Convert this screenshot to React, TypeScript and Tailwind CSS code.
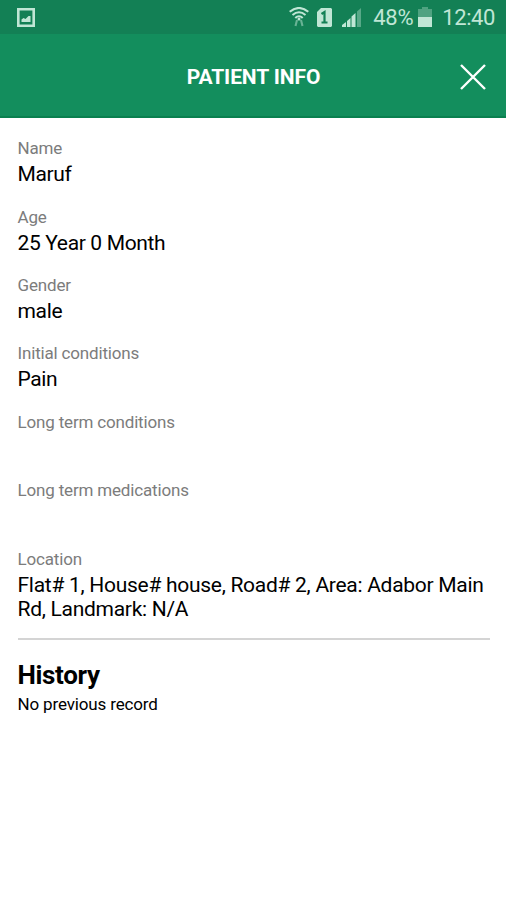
const fields = [
  ["Name", "Maruf"], ["Age", "25 Year 0 Month"], ["Gender", "male"],
  ["Initial conditions", "Pain"], ["Long term conditions", ""], ["Long term medications", ""],
];
const loc = ["Flat# 1, House# house, Road# 2, Area: Adabor Main", "Rd, Landmark: N/A"];

export default function App() {
  return (
    <div className="h-[900px] w-[506px] overflow-hidden bg-white font-['Roboto',sans-serif] text-black">
      <div className="flex h-[34px] items-center bg-[#138055] pr-[11px] pl-[17px] text-[#c0e6d5]">
        <svg width="18" height="19" viewBox="0 0 18 19" fill="none" stroke="currentColor" strokeWidth="2.6"><path d="M1.3 1.3h15.4v16.4H1.3z" /><path d="M4.500 14V11.500l2-1.500 2 1 3-3h2v6z" fill="currentColor" stroke="none" /></svg>
        <svg className="ml-auto" width="20" height="20" viewBox="0 0 20 20" fill="none" stroke="currentColor" strokeWidth="2.1"><path d="M.7 4.800Q10-2.800 19.300 4.800M3.500 8Q10 2.500 16.500 8M6.300 11Q10 7.500 13.700 11" /><circle cx="10" cy="12" r="1.500" fill="currentColor" stroke="none" /><path d="M8 13l-1.500 6M12 13l1.500 6" opacity=".5" /></svg>
        <svg className="ml-2" width="15" height="19" viewBox="0 0 15 19"><path d="M4 0h10l1 1v17l-1 1H1l-1-1V4z" fill="currentColor" /><path d="M4.500 6l3-2v10.500M4.500 14.500h6" fill="none" stroke="#138055" strokeWidth="2.200" /></svg>
        <svg className="ml-[10px]" width="20" height="19" viewBox="0 0 20 19" fill="currentColor"><path d="M0 19v-2l4-3v5zM5 19v-6l3.500-3v9zM9.500 19V8.500L13.500 5v14z" /><path d="M15 19V3.500L19 0v19z" opacity=".4" /></svg>
        <span className="ml-[11px] pt-0.5 text-[22px] leading-none tracking-[-0.300px]">48%</span>
        <svg className="ml-[5px]" width="14" height="20" viewBox="0 0 14 20" fill="currentColor"><path d="M4 0h6v2h4v8H0V2h4z" opacity=".35" /><path d="M0 10h14v10H0z" /></svg>
        <span className="ml-[10px] pt-0.5 text-[22px] leading-none tracking-[-0.400px]">12:40</span>
      </div>
      <header className="grid h-[84px] grid-cols-[1fr_auto_1fr] items-center border-b-2 border-[#0a804f] bg-[#138e5d] text-white">
        <h1 className="col-start-2 pt-1.5 pl-px text-[21px] font-bold tracking-[-0.100px]">PATIENT INFO</h1>
        <svg className="mt-1 mr-5 justify-self-end" width="26" height="26" viewBox="0 0 26 26" stroke="currentColor" strokeWidth="2.400"><path d="M1 1l24 24M25 1L1 25" /></svg>
      </header>
      <main className="pr-4 pl-[17.500px] pt-[18.200px]">
        {fields.map(([label, value]) => (
          <section key={label} className="h-[68.400px]">
            <div className="text-[17px] leading-6 tracking-[-0.170px] text-[#7c7c7c]">{label}</div>
            <div className="text-[21px] leading-7 tracking-[-0.350px]">{value}</div>
          </section>
        ))}
        <div className="text-[17px] leading-6 tracking-[-0.170px] text-[#7c7c7c]">Location</div>
        <div className="mt-0.5 text-[21px] leading-6 tracking-[-0.280px] whitespace-nowrap">{loc.map((l) => <p key={l}>{l}</p>)}</div>
        <hr className="mt-[17px] border-t-2 border-[#d4d4d4]" />
        <h2 className="mt-[19.500px] text-[26px] leading-8 font-bold tracking-[-0.350px]">History</h2>
        <p className="text-[17px] leading-[26px] tracking-[-0.150px]">No previous record</p>
      </main>
    </div>
  );
}
